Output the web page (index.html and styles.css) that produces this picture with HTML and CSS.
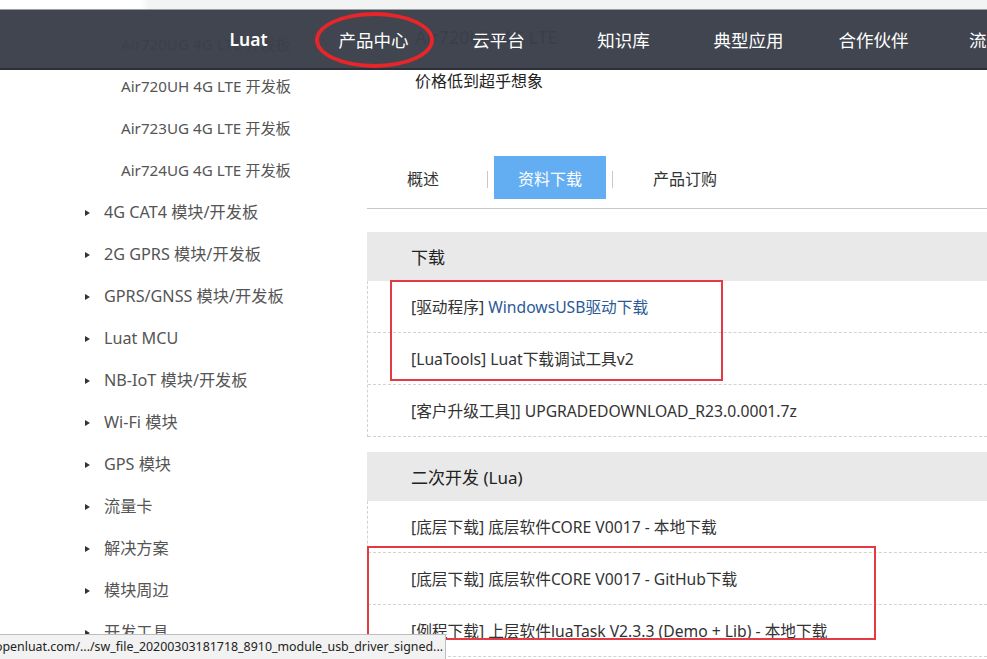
FILE: index.html
```html
<!DOCTYPE html>
<html lang="zh-CN">
<head>
<meta charset="utf-8">
<title>Air720UH 4G LTE 开发板 - 资料下载</title>
<link rel="stylesheet" href="styles.css">
</head>
<body>
<div class="page">
  <aside class="sidebar">
    <ul class="sub-list">
      <li class="sub-item">Air720UG 4G LTE 开发板</li>
      <li class="sub-item">Air720UH 4G LTE 开发板</li>
      <li class="sub-item">Air723UG 4G LTE 开发板</li>
      <li class="sub-item">Air724UG 4G LTE 开发板</li>
    </ul>
    <ul class="cat-list">
      <li class="cat-item"><span class="tri"></span>4G CAT4 模块/开发板</li>
      <li class="cat-item"><span class="tri"></span>2G GPRS 模块/开发板</li>
      <li class="cat-item"><span class="tri"></span>GPRS/GNSS 模块/开发板</li>
      <li class="cat-item"><span class="tri"></span>Luat MCU</li>
      <li class="cat-item"><span class="tri"></span>NB-IoT 模块/开发板</li>
      <li class="cat-item"><span class="tri"></span>Wi-Fi 模块</li>
      <li class="cat-item"><span class="tri"></span>GPS 模块</li>
      <li class="cat-item"><span class="tri"></span>流量卡</li>
      <li class="cat-item"><span class="tri"></span>解决方案</li>
      <li class="cat-item"><span class="tri"></span>模块周边</li>
      <li class="cat-item"><span class="tri"></span>开发工具</li>
    </ul>
  </aside>

  <main class="main">
    <h1 class="prod-title">Air720UH 4G LTE</h1>
    <p class="prod-sub">价格低到超乎想象</p>

    <nav class="tabs">
      <span class="tab tab-first">概述</span>
      <span class="tab-sep"></span>
      <span class="tab tab-active">资料下载</span>
      <span class="tab-sep"></span>
      <span class="tab tab-last">产品订购</span>
    </nav>

    <section class="dl-section">
      <h2 class="dl-head">下载</h2>
      <ul class="dl-rows">
        <li class="dl-row">[驱动程序] <span class="link">WindowsUSB驱动下载</span></li>
        <li class="dl-row">[LuaTools] Luat下载调试工具v2</li>
        <li class="dl-row">[客户升级工具]] UPGRADEDOWNLOAD_R23.0.0001.7z</li>
      </ul>
    </section>

    <section class="dl-section">
      <h2 class="dl-head">二次开发 (Lua)</h2>
      <ul class="dl-rows">
        <li class="dl-row">[底层下载] 底层软件CORE V0017 - 本地下载</li>
        <li class="dl-row">[底层下载] 底层软件CORE V0017 - GitHub下载</li>
        <li class="dl-row">[例程下载] 上层软件luaTask V2.3.3 (Demo + Lib) - 本地下载</li>
      </ul>
    </section>
  </main>
</div>

<div class="topstrip"></div>
<header class="topbar">
  <ul class="nav">
    <li class="nav-item nav-brand">Luat</li>
    <li class="nav-item">产品中心</li>
    <li class="nav-item">云平台</li>
    <li class="nav-item">知识库</li>
    <li class="nav-item">典型应用</li>
    <li class="nav-item">合作伙伴</li>
    <li class="nav-item nav-last">流量卡</li>
  </ul>
</header>

<div class="mark mark-ellipse"></div>
<div class="mark mark-box1"></div>
<div class="mark mark-box2"></div>

<div class="statusbar">openluat.com/.../sw_file_20200303181718_8910_module_usb_driver_signed...</div>
</body>
</html>
```

FILE: styles.css
```css
* { box-sizing: border-box; }
html, body {
  margin: 0;
  padding: 0;
  background: #fff;
  overflow: hidden;
}
body {
  width: 987px;
  height: 659px;
  position: relative;
  font-family: "Noto Sans", "Noto Sans CJK SC", sans-serif;
  color: #333;
}
ul { list-style: none; margin: 0; padding: 0; }
h1, h2, p { margin: 0; font-weight: normal; }

.page {
  display: flex;
  width: 987px;
}

/* sidebar */
.sidebar {
  width: 367px;
  flex: none;
  padding-top: 23px;
}
.sub-item {
  height: 42px;
  line-height: 42px;
  padding-left: 121px;
  font-size: 15.2px;
  color: #555;
  white-space: nowrap;
}
.cat-item {
  height: 42px;
  line-height: 42px;
  padding-left: 85px;
  font-size: 16.2px;
  color: #555;
  display: flex;
  align-items: center;
  white-space: nowrap;
}
.tri {
  width: 0;
  height: 0;
  border-top: 3.5px solid transparent;
  border-bottom: 3.5px solid transparent;
  border-left: 5px solid #333;
  margin-right: 14px;
  margin-top: 1px;
}

/* main */
.main {
  flex: 1;
  padding-top: 23px;
  min-width: 0;
}
.prod-title {
  height: 28px;
  line-height: 28px;
  font-size: 18px;
  padding-left: 48px;
  color: #333;
  white-space: nowrap;
}
.prod-sub {
  margin-top: 18px;
  height: 24px;
  line-height: 24px;
  font-size: 16px;
  padding-left: 48px;
  color: #222;
}

.tabs {
  margin-top: 63px;
  display: flex;
  align-items: center;
  padding-left: 16px;
  padding-bottom: 9px;
  border-bottom: 1px solid #c8c8c8;
}
.tab {
  height: 43px;
  line-height: 46px;
  padding: 0 24px;
  font-size: 16px;
  color: #333;
  white-space: nowrap;
}
.tab-first { margin-right: 24px; }
.tab-active {
  background: #63aef3;
  color: #fff;
  margin: 0 6px;
}
.tab-last { margin-left: 16px; }
.tab-sep {
  width: 1px;
  height: 17px;
  background: #c8c8c8;
  margin-top: 3px;
}

.dl-section { margin-top: 23px; }
.dl-section + .dl-section { margin-top: 15px; }
.dl-head {
  height: 49px;
  line-height: 52px;
  background: #e9e9e9;
  padding-left: 44px;
  font-size: 17px;
  color: #222;
}
.dl-rows {
  border-left: 1px dashed #d2d2d2;
}
.dl-row {
  height: 52px;
  line-height: 52px;
  padding-left: 43px;
  border-bottom: 1px dashed #d2d2d2;
  font-size: 15.7px;
  color: #333;
  white-space: nowrap;
}
.link { color: #2b5a96; }

/* top overlay bar */
.topstrip {
  position: absolute;
  left: 0;
  top: 0;
  width: 987px;
  height: 10px;
  background: linear-gradient(to right, #ffffff 0, #ffffff 140px, #f1f4f3 150px);
  border-bottom: 1px solid #9a9ea4;
}
.topbar {
  position: absolute;
  left: 0;
  top: 10px;
  width: 987px;
  height: 60px;
  background: rgba(58, 63, 74, 0.97);
  border-bottom: 2px solid #2c3038;
  overflow: hidden;
}
.nav {
  display: flex;
  padding-left: 186px;
  height: 58px;
  align-items: center;
  white-space: nowrap;
}
.nav-item {
  width: 125px;
  flex: none;
  text-align: center;
  font-size: 17.5px;
  color: #fff;
}
.nav-last { width: 60px; text-align: left; padding-left: 33px; }
.nav-brand { font-weight: 600; }

/* red annotations */
.mark {
  position: absolute;
  pointer-events: none;
}
.mark-ellipse {
  left: 315px;
  top: 12px;
  width: 119px;
  height: 56px;
  border: 4.5px solid #e8262a;
  border-radius: 50%;
}
.mark-box1 {
  left: 390px;
  top: 280px;
  width: 333px;
  height: 101px;
  border: 2px solid #e33a44;
}
.mark-box2 {
  left: 367px;
  top: 546px;
  width: 509px;
  height: 94px;
  border: 2px solid #e33a44;
}

/* status bar */
.statusbar {
  position: absolute;
  left: 0;
  top: 634px;
  width: 446px;
  height: 25px;
  line-height: 23px;
  background: #f2f2f2;
  border-top: 1px solid #bdbdbd;
  border-right: 1px solid #bdbdbd;
  font-size: 12.4px;
  color: #222;
  text-indent: -5px;
  white-space: nowrap;
  overflow: hidden;
}
```
